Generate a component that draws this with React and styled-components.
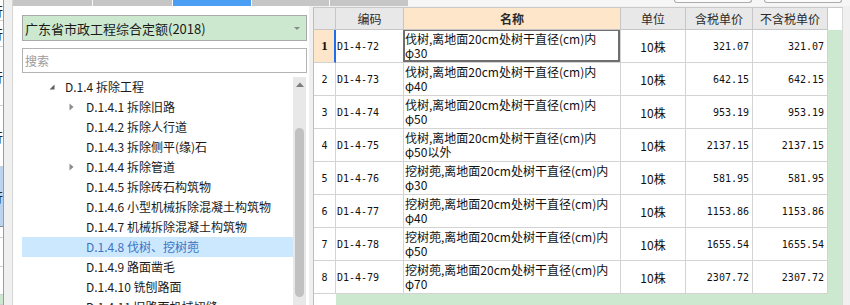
import React from "react";
import styled, { createGlobalStyle } from "styled-components";

const GlobalStyle = createGlobalStyle`
  html, body {
    margin: 0;
    padding: 0;
  }
  body {
    width: 850px;
    height: 305px;
    overflow: hidden;
    background: #f0f0f0;
    font-family: "Noto Sans CJK SC", "Noto Sans", sans-serif;
    color: #1a1a1a;
  }
`;

const stripRows = [
  { h: 21, text: true },
  { h: 26, text: true },
  { h: 59, text: true },
  { h: 61, text: true },
  { h: 60, text: true, active: true },
  { h: 11 },
  { h: 29 },
  { h: 28 },
  { h: 10, green: true },
];

const tabs = [79, 79, 78, 77, 78];

const treeItems = [
  { level: 1, label: "D.1.4 拆除工程", arrow: "open" },
  { level: 2, label: "D.1.4.1 拆除旧路", arrow: "closed" },
  { level: 2, label: "D.1.4.2 拆除人行道" },
  { level: 2, label: "D.1.4.3 拆除侧平(缘)石" },
  { level: 2, label: "D.1.4.4 拆除管道", arrow: "closed" },
  { level: 2, label: "D.1.4.5 拆除砖石构筑物" },
  { level: 2, label: "D.1.4.6 小型机械拆除混凝土构筑物" },
  { level: 2, label: "D.1.4.7 机械拆除混凝土构筑物" },
  { level: 2, label: "D.1.4.8 伐树、挖树蔸", selected: true },
  { level: 2, label: "D.1.4.9 路面凿毛" },
  { level: 2, label: "D.1.4.10 铣刨路面" },
  { level: 2, label: "D.1.4.11 旧路面机械切缝" },
];

const FELL = "伐树,离地面20cm处树干直径(cm)内";
const DIG = "挖树蔸,离地面20cm处树干直径(cm)内";

const rows = [
  { code: "D1-4-72", name: FELL, spec: "φ30", tax: "321.07", noTax: "321.07" },
  { code: "D1-4-73", name: FELL, spec: "φ40", tax: "642.15", noTax: "642.15" },
  { code: "D1-4-74", name: FELL, spec: "φ50", tax: "953.19", noTax: "953.19" },
  { code: "D1-4-75", name: FELL, spec: "φ50以外", tax: "2137.15", noTax: "2137.15" },
  { code: "D1-4-76", name: DIG, spec: "φ30", tax: "581.95", noTax: "581.95" },
  { code: "D1-4-77", name: DIG, spec: "φ40", tax: "1153.86", noTax: "1153.86" },
  { code: "D1-4-78", name: DIG, spec: "φ50", tax: "1655.54", noTax: "1655.54" },
  { code: "D1-4-79", name: DIG, spec: "φ70", tax: "2307.72", noTax: "2307.72" },
];

const App = () => {
  return (
    <>
      <GlobalStyle />
      <Page>
        <SideStrip>
          <CutColumn>
            {stripRows.map((r, i) => (
              <StripCell key={i} $h={r.h} $active={r.active} $green={r.green}>
                {r.text && <CutGlyph>行</CutGlyph>}
              </StripCell>
            ))}
          </CutColumn>
          <StripBand />
        </SideStrip>

        <Workspace>
          <TopBar>
            <Tabs>
              {tabs.map((w, i) => (
                <Tab key={i} $w={w} $active={i === 2} />
              ))}
            </Tabs>
            <PeekButtons>
              <PeekButton />
              <PeekButton />
            </PeekButtons>
          </TopBar>

          <Main>
            <LibraryPanel>
              <Dropdown>
                <span>广东省市政工程综合定额(2018)</span>
                <DropArrow />
              </Dropdown>
              <SearchBox placeholder="搜索" readOnly />
              <TreeWrap>
                <Tree>
                  {treeItems.map((item) => (
                    <TreeRow
                      key={item.label}
                      $level={item.level}
                      $selected={item.selected}
                    >
                      <ArrowSlot $level={item.level}>
                        {item.arrow === "open" && (
                          <svg width="6" height="6" viewBox="0 0 6 6">
                            <polygon points="5.5,0.5 5.5,5.5 0.5,5.5" fill="#5e5e5e" />
                          </svg>
                        )}
                        {item.arrow === "closed" && (
                          <svg width="5" height="8" viewBox="0 0 5 8">
                            <polygon points="0.5,0.5 4.5,4 0.5,7.5" fill="#8c8c8c" />
                          </svg>
                        )}
                      </ArrowSlot>
                      <TreeLabel>{item.label}</TreeLabel>
                    </TreeRow>
                  ))}
                </Tree>
                <ScrollTrack>
                  <ScrollArrow>
                    <svg width="8" height="5" viewBox="0 0 8 5">
                      <polygon points="0,5 4,0.5 8,5" fill="#7d7d7d" />
                    </svg>
                  </ScrollArrow>
                  <ScrollThumb />
                </ScrollTrack>
              </TreeWrap>
            </LibraryPanel>

            <Splitter />

            <TableArea>
              <Grid>
                <HeadCell />
                <HeadCell>编码</HeadCell>
                <HeadCell $current>名称</HeadCell>
                <HeadCell>单位</HeadCell>
                <HeadCell>含税单价</HeadCell>
                <HeadCell>不含税单价</HeadCell>
                <HeadFiller />

                {rows.map((r, i) => (
                  <React.Fragment key={r.code}>
                    <RowNum $current={i === 0}>{i + 1}</RowNum>
                    <CodeCell>{r.code}</CodeCell>
                    <NameCell $focused={i === 0}>
                      <NameLine>{r.name}</NameLine>
                      <NameLine>{r.spec}</NameLine>
                    </NameCell>
                    <UnitCell>10株</UnitCell>
                    <PriceCell>{r.tax}</PriceCell>
                    <PriceCell>{r.noTax}</PriceCell>
                    <GreenFill />
                  </React.Fragment>
                ))}

                <BlankRowNum />
                <EmptyArea />
              </Grid>
            </TableArea>
          </Main>
        </Workspace>
      </Page>
    </>
  );
};

export default App;

const Page = styled.div`
  display: flex;
  width: 850px;
  height: 305px;
  overflow: hidden;
`;

const SideStrip = styled.div`
  display: flex;
  width: 13px;
  flex: none;
`;

const CutColumn = styled.div`
  width: 3px;
  display: flex;
  flex-direction: column;
  border-right: 1px solid #9c9c9c;
`;

const StripCell = styled.div`
  height: ${(p) => p.$h}px;
  box-sizing: border-box;
  border-bottom: 1px solid ${(p) => (p.$active ? "#8a8a8a" : "#cfcfcf")};
  background: ${(p) => (p.$active ? "#b9d3f1" : p.$green ? "#cce8cf" : "#ffffff")};
  display: flex;
  align-items: center;
  overflow: hidden;
`;

const CutGlyph = styled.span`
  margin-left: -10px;
  font-size: 13px;
  line-height: 13px;
  color: #222;
`;

const StripBand = styled.div`
  flex: 1;
  background: #f0f0f0;
  border-right: 1px solid #d6d6d6;
`;

const Workspace = styled.div`
  flex: 1;
  display: flex;
  flex-direction: column;
  min-width: 0;
`;

const TopBar = styled.div`
  height: 6px;
  flex: none;
  display: flex;
  background: #f6f6f6;
  overflow: hidden;
`;

const Tabs = styled.div`
  display: flex;
  gap: 1px;
`;

const Tab = styled.div`
  width: ${(p) => p.$w}px;
  height: 6px;
  background: ${(p) => (p.$active ? "#4a9ff5" : "#c6c6c6")};
`;

const PeekButtons = styled.div`
  display: flex;
  gap: 12px;
  margin-left: auto;
  margin-right: 8px;
`;

const PeekButton = styled.div`
  width: 78px;
  height: 3px;
  box-sizing: border-box;
  border: 1px solid #ababab;
  border-top: none;
  border-radius: 0 0 3px 3px;
  background: #fbfbfb;
`;

const Main = styled.div`
  flex: 1;
  display: flex;
  min-height: 0;
`;

const LibraryPanel = styled.div`
  width: 296px;
  flex: none;
  box-sizing: border-box;
  background: #ffffff;
  padding: 9px 2px 0 9px;
  display: flex;
  flex-direction: column;
  min-height: 0;
`;

const Dropdown = styled.div`
  height: 26px;
  flex: none;
  box-sizing: border-box;
  border: 1px solid #a9a9a9;
  background: #cce8cf;
  display: flex;
  align-items: center;
  padding: 0 6px 0 2px;
  font-size: 13px;
  color: #1a1a1a;
  white-space: nowrap;

  span {
    flex: 1;
  }
`;

const DropArrow = styled.div`
  width: 0;
  height: 0;
  border-left: 3px solid transparent;
  border-right: 3px solid transparent;
  border-top: 3px solid #8a8a8a;
`;

const SearchBox = styled.input`
  margin-top: 7px;
  height: 25px;
  flex: none;
  box-sizing: border-box;
  border: 1px solid #b3b3b3;
  outline: none;
  padding: 0 2px;
  font-family: "Noto Sans CJK SC", sans-serif;
  font-size: 12px;
  background: #ffffff;

  &::placeholder {
    color: #9b9b9b;
  }
`;

const TreeWrap = styled.div`
  margin-top: 4px;
  flex: 1;
  display: flex;
  min-height: 0;
  overflow: hidden;
  margin-right: 1px;
`;

const Tree = styled.div`
  flex: 1;
  min-width: 0;
  overflow: hidden;
`;

const TreeRow = styled.div`
  height: 20px;
  display: flex;
  align-items: center;
  padding-left: ${(p) => (p.$level === 1 ? 24 : 45)}px;
  background: ${(p) => (p.$selected ? "#cce8ff" : "transparent")};
  color: ${(p) => (p.$selected ? "#3f72c0" : "#1a1a1a")};
  font-size: 12px;
  white-space: nowrap;
`;

const ArrowSlot = styled.div`
  width: 19px;
  flex: none;
  display: flex;
  align-items: center;
  padding-left: ${(p) => (p.$level === 1 ? 3 : 2)}px;
  box-sizing: border-box;
  height: 20px;

  svg {
    display: block;
  }
`;

const TreeLabel = styled.span`
  line-height: 20px;
`;

const ScrollTrack = styled.div`
  width: 13px;
  flex: none;
  background: #e8e8e8;
  display: flex;
  flex-direction: column;
  align-items: center;
`;

const ScrollArrow = styled.div`
  height: 14px;
  display: flex;
  align-items: center;
  justify-content: center;

  svg {
    display: block;
  }
`;

const ScrollThumb = styled.div`
  margin-top: 37px;
  width: 9px;
  height: 169px;
  border-radius: 5px;
  background: #c1c1c1;
`;

const Splitter = styled.div`
  width: 4px;
  flex: none;
  background: #f0f0f0;
`;

const TableArea = styled.div`
  flex: 1;
  display: flex;
  padding-top: 1px;
  background: #f0f0f0;
  min-width: 0;
`;

const Grid = styled.div`
  display: grid;
  grid-template-columns: 22px 68px 217px 65px 67px 75px 14px;
  grid-template-rows: 22px repeat(8, 33px) 1fr;
  border-left: 1px solid #bdbdbd;
  border-top: 1px solid #c9c9c9;
  border-right: 1px solid #d8d8d8;
  background: #ffffff;
  align-self: stretch;
`;

const HeadCell = styled.div`
  box-sizing: border-box;
  border-right: 1px solid #c6c6c6;
  border-bottom: 1px solid #c6c6c6;
  background: ${(p) => (p.$current ? "#fde6c9" : "#e8e8e8")};
  font-size: 12px;
  font-weight: ${(p) => (p.$current ? 700 : 400)};
  color: #2a2a2a;
  display: flex;
  align-items: center;
  justify-content: center;
  white-space: nowrap;
`;

const HeadFiller = styled.div`
  background: #ffffff;
`;

const BodyCell = styled.div`
  box-sizing: border-box;
  border-right: 1px solid #d3d3d3;
  border-bottom: 1px solid #d3d3d3;
  display: flex;
  align-items: center;
  background: #ffffff;
  color: #111;
  white-space: nowrap;
  overflow: hidden;
`;

const RowNum = styled(BodyCell)`
  justify-content: center;
  background: ${(p) => (p.$current ? "#fde6c9" : "#ffffff")};
  border-right: ${(p) => (p.$current ? "2px solid #1f6fe6" : "1px solid #d3d3d3")};
  font-family: ${(p) =>
    p.$current ? '"Liberation Serif", serif' : '"DejaVu Sans Mono", monospace'};
  font-size: ${(p) => (p.$current ? 13 : 10)}px;
  font-weight: ${(p) => (p.$current ? 700 : 400)};
  padding-left: ${(p) => (p.$current ? 1 : 0)}px;
`;

const CodeCell = styled(BodyCell)`
  padding-left: 1px;
  font-family: "DejaVu Sans Mono", monospace;
  font-size: 10px;
`;

const NameCell = styled(BodyCell)`
  position: relative;
  flex-direction: column;
  align-items: flex-start;
  justify-content: flex-start;
  padding: 2px 0 0 1px;
  font-size: 12px;
  overflow: visible;

  ${(p) =>
    p.$focused &&
    `
    &::after {
      content: "";
      position: absolute;
      top: 0;
      left: -1px;
      right: 0;
      bottom: 0;
      border: 2px solid #6e6e6e;
      border-top-width: 1px;
      pointer-events: none;
    }
  `}
`;

const NameLine = styled.div`
  line-height: 14px;
  height: 14px;
`;

const UnitCell = styled(BodyCell)`
  justify-content: center;
  font-size: 12px;
`;

const PriceCell = styled(BodyCell)`
  justify-content: flex-end;
  padding-right: 3px;
  font-family: "DejaVu Sans Mono", monospace;
  font-size: 10px;
`;

const GreenFill = styled.div`
  background: #cce8cf;
`;

const BlankRowNum = styled.div`
  background: #ffffff;
`;

const EmptyArea = styled.div`
  grid-column: 2 / span 6;
  background: #cce8cf;
`;
